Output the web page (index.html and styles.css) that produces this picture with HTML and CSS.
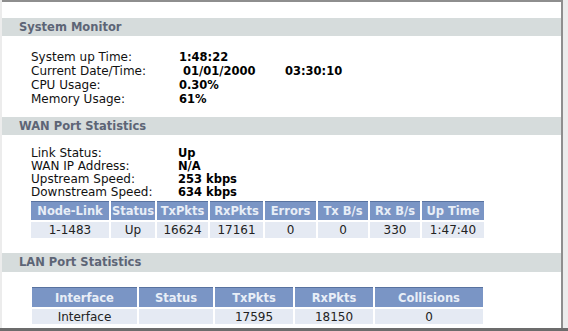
FILE: index.html
```html
<!doctype html>
<html>
  <head>
    <meta charset="UTF-8">
    <title>Status</title>
    <link rel="stylesheet" href="styles.css">
  </head>
  <body>
    <div class="screen">
      <div class="frame">
        <div class="bar bar-first">System Monitor</div>
        <div class="info info-sys">
          <div class="row"><span class="label">System up Time:</span><b>1:48:22</b></div>
          <div class="row"><span class="label">Current Date/Time:</span><b class="day">01/01/2000</b><b>03:30:10</b></div>
          <div class="row"><span class="label">CPU Usage:</span><b>0.30%</b></div>
          <div class="row"><span class="label">Memory Usage:</span><b>61%</b></div>
        </div>

        <div class="bar bar-wan">WAN Port Statistics</div>
        <div class="info info-wan">
          <div class="row"><span class="label">Link Status:</span><b>Up</b></div>
          <div class="row"><span class="label">WAN IP Address:</span><b>N/A</b></div>
          <div class="row"><span class="label">Upstream Speed:</span><b>253 kbps</b></div>
          <div class="row"><span class="label">Downstream Speed:</span><b>634 kbps</b></div>
        </div>
        <table class="stats wan">
          <tr>
            <th class="w-node">Node-Link</th>
            <th class="w-status">Status</th>
            <th class="w-tx">TxPkts</th>
            <th class="w-rx">RxPkts</th>
            <th class="w-err">Errors</th>
            <th class="w-txb">Tx B/s</th>
            <th class="w-rxb">Rx B/s</th>
            <th class="w-up">Up Time</th>
          </tr>
          <tr>
            <td>1-1483</td>
            <td>Up</td>
            <td>16624</td>
            <td>17161</td>
            <td>0</td>
            <td>0</td>
            <td>330</td>
            <td>1:47:40</td>
          </tr>
        </table>

        <div class="bar bar-lan">LAN Port Statistics</div>
        <table class="stats lan">
          <tr>
            <th class="l-if">Interface</th>
            <th class="l-status">Status</th>
            <th class="l-tx">TxPkts</th>
            <th class="l-rx">RxPkts</th>
            <th class="l-col">Collisions</th>
          </tr>
          <tr>
            <td>Interface</td>
            <td></td>
            <td>17595</td>
            <td>18150</td>
            <td>0</td>
          </tr>
        </table>
      </div>
    </div>
  </body>
</html>
```

FILE: styles.css
```css
html, body{
  margin: 0;
  padding: 0;
}
body{
  font-family: "DejaVu Sans", Verdana, sans-serif;
  font-size: 12px;
  color: #111;
  background: #ececec;
}
.screen{
  height: 328px;
  border-bottom: 3px solid #6c6c6c;
}
.frame{
  margin-left: 2px;
  width: 559px;
  height: 326px;
  background: #fff;
  border-top: 2px solid #8e8e8e;
  border-right: 2px solid #8e8e8e;
}
.bar{
  height: 18px;
  line-height: 18px;
  padding-left: 17px;
  background: #d6dcdc;
  color: #5d6576;
  font-size: 11.5px;
  font-weight: bold;
}
.bar-first{
  margin-top: 16px;
}
.bar-wan{
  margin-top: 11px;
}
.bar-lan{
  margin-top: 13px;
  height: 19px;
  line-height: 19px;
}
.info{
  padding-left: 29px;
}
.row{
  display: flex;
}
.label{
  width: 148px;
  flex: none;
}
.info b{
  color: #000;
  font-size: 11.5px;
}
.info-sys{
  padding-top: 14px;
  line-height: 14px;
}
.info-wan{
  padding-top: 12px;
  line-height: 13px;
}
.info-wan .label{
  width: 147px;
}
.info .day{
  width: 102px;
  padding-left: 4px;
}
.stats{
  border-spacing: 2px;
  table-layout: fixed;
  margin-left: 27px;
}
.stats th, .stats td{
  padding: 0;
  text-align: center;
  white-space: nowrap;
}
.stats th{
  background: #7a95c5;
  border-top: 1px solid #58729f;
  color: #e8eef7;
  font-size: 11.5px;
  font-weight: bold;
}
.stats td{
  background: #e5eaf3;
  color: #222;
}
.wan th{
  height: 18px;
}
.wan td{
  height: 16px;
}
.lan{
  margin-top: 13px;
  margin-left: 28px;
}
.lan th{
  height: 19px;
}
.lan td{
  height: 15px;
}
.w-node{ width: 78px; }
.w-status{ width: 44px; }
.w-tx{ width: 51px; }
.w-rx{ width: 53px; }
.w-err{ width: 51px; }
.w-txb{ width: 50px; }
.w-rxb{ width: 50px; }
.w-up{ width: 62px; }
.l-if{ width: 105px; }
.l-status{ width: 74px; }
.l-tx{ width: 78px; }
.l-rx{ width: 78px; }
.l-col{ width: 108px; }
```
